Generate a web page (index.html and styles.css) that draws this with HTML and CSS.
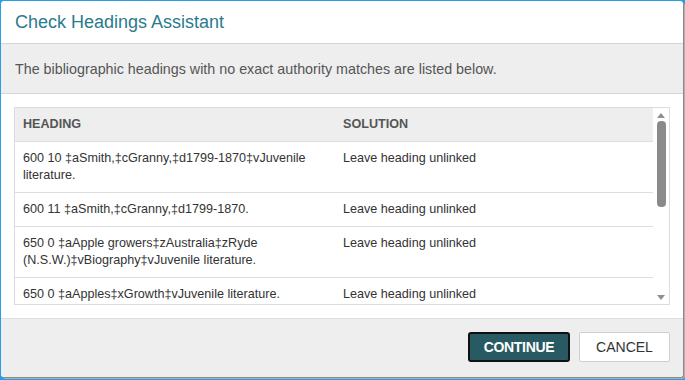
FILE: index.html
```html
<!DOCTYPE html>
<html lang="en">
<head>
    <meta charset="UTF-8">
    <meta name="viewport" content="width=device-width, initial-scale=1.0">
    <title>Check Headings Assistant</title>
    <link rel="stylesheet" href="styles.css">
</head>
<body>

    <div class="dialog">
        <div class="dialog-header">
            <h2>Check Headings Assistant</h2>
        </div>
        <div class="dialog-note">
            The bibliographic headings with no exact authority matches are listed below.
        </div>

        <div class="dialog-body">
            <div class="table-box">
                <div class="table-scroll">
                    <table class="headings">
                        <thead>
                            <tr>
                                <th class="col-heading">HEADING</th>
                                <th>SOLUTION</th>
                            </tr>
                        </thead>
                        <tbody>
                            <tr>
                                <td>600 10 &Dagger;aSmith,&Dagger;cGranny,&Dagger;d1799-1870&Dagger;vJuvenile literature.</td>
                                <td>Leave heading unlinked</td>
                            </tr>
                            <tr>
                                <td>600 11 &Dagger;aSmith,&Dagger;cGranny,&Dagger;d1799-1870.</td>
                                <td>Leave heading unlinked</td>
                            </tr>
                            <tr>
                                <td>650 0 &Dagger;aApple growers&Dagger;zAustralia&Dagger;zRyde (N.S.W.)&Dagger;vBiography&Dagger;vJuvenile literature.</td>
                                <td>Leave heading unlinked</td>
                            </tr>
                            <tr>
                                <td>650 0 &Dagger;aApples&Dagger;xGrowth&Dagger;vJuvenile literature.</td>
                                <td>Leave heading unlinked</td>
                            </tr>
                        </tbody>
                    </table>
                </div>
                <!-- fake scrollbar -->
                <div class="scrollbar">
                    <span class="arrow-up"></span>
                    <div class="thumb"></div>
                    <span class="arrow-down"></span>
                </div>
            </div>
        </div>

        <div class="dialog-footer">
            <button type="button" class="continue-btn">CONTINUE</button>
            <button type="button" class="cancel-btn">CANCEL</button>
        </div>
    </div>

</body>
</html>
```

FILE: styles.css
```css
body {
    margin: 0;
    background-color: #2b9ce8;
    font-family: "Liberation Sans", Arial, sans-serif;
    width: 685px;
    height: 380px;
    overflow: hidden;
}
.dialog {
    margin: 1px 0 0 1px;
    width: 682px;
    height: 376px;
    background-color: #fff;
    border-radius: 3px;
    box-shadow: 1px 1px 0 #8a8a8a, 2px 2px 0 #b0b0b0;
    display: flex;
    flex-direction: column;
    overflow: hidden;
}
.dialog-header {
    height: 42px;
    display: flex;
    align-items: center;
    padding: 0 14px;
    border-bottom: 1px solid #d6d6d6;
}
.dialog-header h2 {
    margin: 0;
    font-size: 18px;
    font-weight: normal;
    color: #2a7b8c;
}
.dialog-note {
    height: 49px;
    display: flex;
    align-items: center;
    padding: 0 14px;
    background-color: #eeeeee;
    border-bottom: 1px solid #d6d6d6;
    font-size: 14.3px;
    color: #555;
}
.dialog-body {
    padding: 13px;
}
.table-box {
    height: 196px;
    border: 1px solid #dcdcdc;
    display: flex;
}
.table-scroll {
    flex: 1;
    overflow: hidden;
}
.headings {
    width: 100%;
    border-collapse: collapse;
    font-size: 12.6px;
    line-height: 17px;
    color: #333;
}
.headings th,
.headings td {
    text-align: left;
    vertical-align: top;
    padding: 8px;
    border-bottom: 1px solid #dedede;
}
.headings th {
    background-color: #eeeeee;
    color: #555;
    font-weight: bold;
}
.col-heading {
    width: 304px;
}
.scrollbar {
    width: 16px;
    display: flex;
    flex-direction: column;
    align-items: center;
}
.arrow-up,
.arrow-down {
    width: 0;
    height: 0;
    border-left: 4px solid transparent;
    border-right: 4px solid transparent;
}
.arrow-up {
    margin-top: 5px;
    border-bottom: 5px solid #8f8f8f;
}
.arrow-down {
    margin-top: auto;
    margin-bottom: 4px;
    border-top: 5px solid #8f8f8f;
}
.thumb {
    margin-top: 3px;
    width: 9px;
    height: 86px;
    border-radius: 4px;
    background-color: #8a8a8a;
}
.dialog-footer {
    flex: 1;
    background-color: #eeeeee;
    border-top: 1px solid #dedede;
    display: flex;
    justify-content: flex-end;
    align-items: flex-start;
    gap: 9px;
    padding: 13px 13px 0 0;
}
button {
    height: 30px;
    font-family: "Liberation Sans", Arial, sans-serif;
    font-size: 14px;
    border-radius: 2px;
    cursor: pointer;
}
.continue-btn {
    width: 102px;
    background-color: #285a63;
    color: #fff;
    font-weight: bold;
    letter-spacing: -0.3px;
    border: 2px solid #111;
    border-radius: 3px;
}
.cancel-btn {
    width: 91px;
    background-color: #fff;
    color: #333;
    border: 1px solid #cfcfcf;
}
```
